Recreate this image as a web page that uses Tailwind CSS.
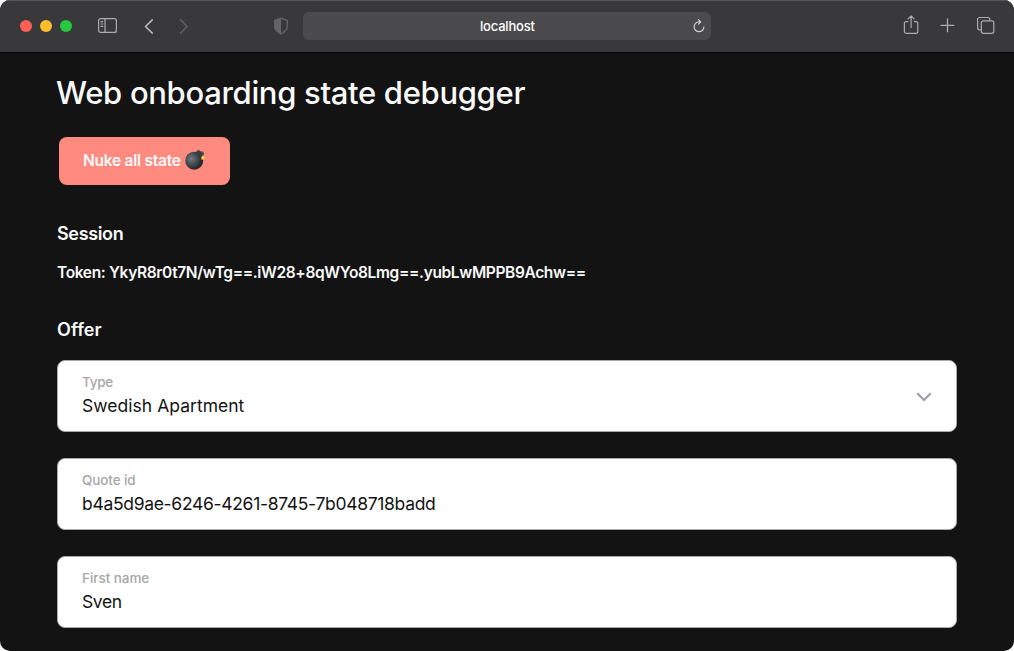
<!DOCTYPE html>
<html lang="en">
<head>
<meta charset="utf-8">
<title>Web onboarding state debugger</title>
<script src="https://cdn.jsdelivr.net/npm/@tailwindcss/browser@4"></script>
</head>
<body class="bg-white overflow-hidden font-['Inter','Liberation_Sans',sans-serif]">
<div class="w-[1014px] h-[651px] rounded-[10px] overflow-hidden bg-[#131313] flex flex-col">
  <header class="h-[53px] shrink-0 bg-[#39393b] border-t border-t-[#58585a] border-b border-b-black flex items-center pb-px pl-5 pr-[18px]">
    <div class="flex gap-2">
      <span class="size-3 rounded-full bg-[#ff5f57]"></span>
      <span class="size-3 rounded-full bg-[#febc2e]"></span>
      <span class="size-3 rounded-full bg-[#28c840]"></span>
    </div>
    <svg class="ml-[25px] size-[22px]" viewBox="0 0 22 22" fill="none" stroke="#acacad" stroke-width="1.2"><rect x="1.6" y="3.6" width="17.8" height="13.8" rx="2"/><path d="M8 3.600v13.800M3.600 6.600h2.600M3.600 9h2.600M3.600 11.400h2.600"/></svg>
    <svg class="ml-4 size-5" viewBox="0 0 20 20" fill="none" stroke="#bdbdbe" stroke-width="1.5" stroke-linecap="round" stroke-linejoin="round"><path d="M17.300 3.900 10.500 10.500l6.800 6.600"/></svg>
    <svg class="ml-[14px] size-5" viewBox="0 0 20 20" fill="none" stroke="#606062" stroke-width="1.5" stroke-linecap="round" stroke-linejoin="round"><path d="m11.600 3.900 6.600 6.600-6.600 6.600"/></svg>
    <svg class="ml-[84px] w-4 h-5" viewBox="0 0 16 20"><path d="M8 2.200 14.300 4.400v6.400c0 3.200-3 5.400-6.300 7.200C4.700 16.200 1.700 14 1.700 10.800V4.400Z" fill="none" stroke="#656568" stroke-width="1.300"/><path d="M8 2.200v15.800C4.700 16.200 1.700 14 1.700 10.800V4.400Z" fill="#656568"/></svg>
    <div class="ml-[14px] w-[408px] h-7 rounded-md bg-[#4b4b4d] flex items-center">
      <span class="pl-[177px] pt-px text-[13px] font-medium text-white tracking-[-0.2px]">localhost</span>
      <svg class="ml-auto mr-1 size-4" viewBox="0 0 16 16" fill="none" stroke="#cfcfd0" stroke-width="1.200" stroke-linecap="round" stroke-linejoin="round"><path d="M12.900 8.800A4.900 4.900 0 1 1 8 3.900h1.300M7.500 1.600l2.300 2.300-2.300 2.300"/></svg>
    </div>
    <svg class="ml-auto size-[22px]" viewBox="0 0 22 22" fill="none" stroke="#acacad" stroke-width="1.200" stroke-linecap="round" stroke-linejoin="round"><path d="M7.900 6.600H6.200A1.800 1.800 0 0 0 4.400 8.400v8.200a1.800 1.800 0 0 0 1.800 1.800h9.800a1.800 1.800 0 0 0 1.800-1.800V8.400A1.800 1.800 0 0 0 16 6.600h-1.700M11.100 12.500V1M8.100 3.900l3-3 3 3"/></svg>
    <svg class="ml-[15px] size-[22px]" viewBox="0 0 22 22" fill="none" stroke="#acacad" stroke-width="1.300" stroke-linecap="round"><path d="M10.500 4v12.800M4.100 10.400h12.800"/></svg>
    <svg class="ml-[15px] size-[22px]" viewBox="0 0 22 22" fill="none" stroke="#acacad" stroke-width="1.200" stroke-linejoin="round"><rect x="7.300" y="5.800" width="12.500" height="12.500" rx="2"/><path d="M7.300 14.800H5.600a2 2 0 0 1-2-2V4.500a2 2 0 0 1 2-2h8.200a2 2 0 0 1 2 2v1.300"/></svg>
  </header>
  <main class="px-[57px] pt-5 text-[#fafafa]">
    <h1 class="-ml-px text-[31px] leading-10 font-medium tracking-[-0.32px] whitespace-nowrap">Web onboarding state debugger</h1>
    <button class="mt-6 ml-[2px] w-[171px] h-12 rounded-lg bg-[#ff8a80] flex items-center pb-[2px] pl-6 text-[15.5px] font-semibold whitespace-nowrap">
      <span class="pt-[2px] tracking-[-0.25px] leading-6">Nuke all state</span>
      <svg class="ml-1 w-5 h-[22px]" viewBox="0 0 20 22">
        <defs><radialGradient id="bomb" cx=".35" cy=".4" r=".7"><stop offset="0" stop-color="#747b80"/><stop offset=".5" stop-color="#41474c"/><stop offset="1" stop-color="#171b1f"/></radialGradient></defs>
        <path d="M15.500 3.500c2-1.500 3.500.3 2.700 3.500" fill="none" stroke="#625447" stroke-width="1.400"/>
        <circle cx="9.200" cy="11.700" r="9" fill="url(#bomb)"/>
        <path d="m10.500 3.200 3-2.500 5 4-2.200 3.500Z" fill="#383e43"/>
        <path d="m18.200 5.200.5 2 1.300 1-.8 1.200.2 1.700-1.700-.5-1.300.5.100-1.800-.8-1.200 1.800-.6Z" fill="#ffb629"/><circle cx="17.900" cy="8.700" r=".9" fill="#fff176"/>
      </svg>
    </button>
    <h2 class="mt-[37px] text-lg leading-6 font-semibold"><span class="tracking-[-0.35px]">Session</span></h2>
    <p class="mt-[15px] text-[15.5px] leading-6 font-semibold whitespace-nowrap"><span class="tracking-[-0.36px]">Token: YkyR8r0t7N/wTg==.iW28+8qWYo8Lmg==.yubLwMPPB9Achw==</span></p>
    <h2 class="mt-[33px] text-lg leading-6 font-semibold"><span class="tracking-[0.05px]">Offer</span></h2>
    <div class="mt-[18px] flex flex-col gap-[26px]">
      <div class="h-[72px] rounded-lg bg-white border border-[#aaa] pl-6 pr-6 flex items-center justify-between">
        <div class="flex flex-col"><span class="text-[13.5px] leading-5 font-medium tracking-[-0.3px] text-[#a7a7a7]">Type</span><span class="text-[17.5px] leading-7 tracking-[0.03px] text-[#131313]">Swedish Apartment</span></div>
        <svg class="mt-[2px] w-4 h-[10px]" viewBox="0 0 16 10" fill="none" stroke="#9b9bac" stroke-width="2"><path d="m1.300 1.300 6.700 6.700 6.700-6.700"/></svg>
      </div>
      <div class="h-[72px] rounded-lg bg-white border border-[#aaa] pl-6 flex items-center">
        <div class="flex flex-col"><span class="text-[13.5px] leading-5 font-medium tracking-[-0.1px] text-[#a7a7a7]">Quote id</span><span class="text-[17.5px] leading-7 tracking-[-0.31px] text-[#131313]">b4a5d9ae-6246-4261-8745-7b048718badd</span></div>
      </div>
      <div class="h-[72px] rounded-lg bg-white border border-[#aaa] pl-6 flex items-center">
        <div class="flex flex-col"><span class="text-[13.5px] leading-5 font-medium tracking-[-0.05px] text-[#a7a7a7]">First name</span><span class="text-[17.5px] leading-7 tracking-[-0.4px] text-[#131313]">Sven</span></div>
      </div>
    </div>
  </main>
</div>
</body>
</html>
